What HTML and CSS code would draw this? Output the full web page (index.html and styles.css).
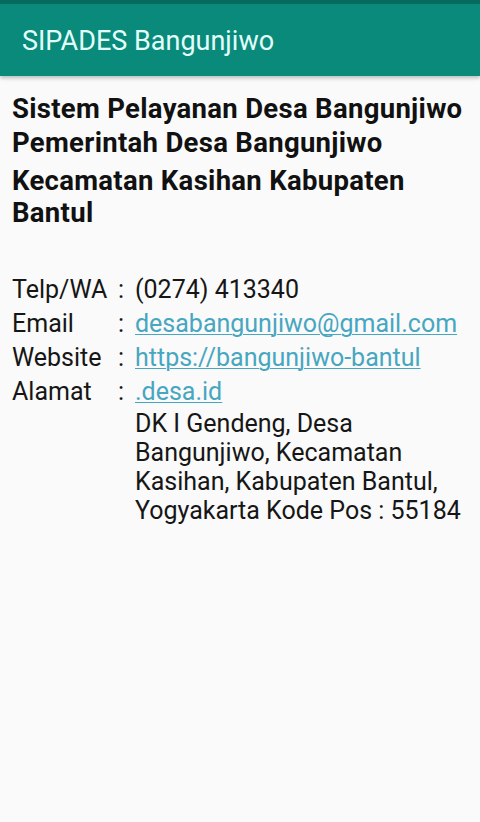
FILE: index.html
```html
<!DOCTYPE html>
<html>
<head>
<meta charset="utf-8">
<link rel="stylesheet" href="styles.css">
</head>
<body>
<header class="appbar">
  <div class="appbar-title">SIPADES Bangunjiwo</div>
</header>
<main class="content">
  <h1 class="heading heading-a">Sistem Pelayanan Desa Bangunjiwo<br>Pemerintah Desa Bangunjiwo</h1>
  <h2 class="heading heading-b">Kecamatan Kasihan Kabupaten Bantul</h2>
  <section class="info">
    <div class="col labels">
      <div>Telp/WA</div>
      <div>Email</div>
      <div>Website</div>
      <div>Alamat</div>
    </div>
    <div class="col colons">
      <div>:</div>
      <div>:</div>
      <div>:</div>
      <div>:</div>
    </div>
    <div class="col values">
      <div>(0274) 413340</div>
      <div><a class="link" href="#">desabangunjiwo@gmail.com</a></div>
      <div class="website"><a class="link" href="#">https://bangunjiwo-bantul<br>.desa.id</a></div>
      <div class="address">DK I Gendeng, Desa Bangunjiwo, Kecamatan Kasihan, Kabupaten Bantul, Yogyakarta Kode Pos : 55184</div>
    </div>
  </section>
</main>
</body>
</html>
```
FILE: styles.css
```css
html, body {
  margin: 0;
  padding: 0;
}
body {
  width: 480px;
  height: 822px;
  background: #fafafa;
  font-family: Roboto, "Noto Sans", "Liberation Sans", sans-serif;
  color: #111;
  overflow: hidden;
}
.appbar {
  height: 76px;
  background: #0a8a7a;
  border-top: 4px solid #066b5e;
  box-sizing: border-box;
  display: flex;
  align-items: center;
  padding-left: 22px;
  box-shadow: 0 2px 4px rgba(0,0,0,0.25);
}
.appbar-title {
  color: #e2fffb;
  font-size: 27px;
  font-weight: 400;
  padding-top: 2px;
}
.content {
  padding: 16px 12px 0 12px;
}
.heading {
  margin: 0;
  font-size: 27.5px;
  font-weight: 700;
  color: #111;
  letter-spacing: 0.3px;
}
.heading-a {
  line-height: 34px;
}
.heading-b {
  line-height: 32px;
  margin-top: 5px;
}
.info {
  margin-top: 44px;
  display: flex;
  font-size: 25px;
  line-height: 34px;
  color: #161616;
}
.labels {
  width: 106px;
  flex-shrink: 0;
}
.colons {
  width: 17px;
  flex-shrink: 0;
}
.values {
  flex: 1;
  min-width: 0;
  display: flex;
  flex-direction: column;
}
.link {
  color: #47a6c0;
  text-decoration: underline;
  text-decoration-thickness: 1px;
  text-underline-offset: 2px;
}
.address {
  line-height: 29px;
}
```
